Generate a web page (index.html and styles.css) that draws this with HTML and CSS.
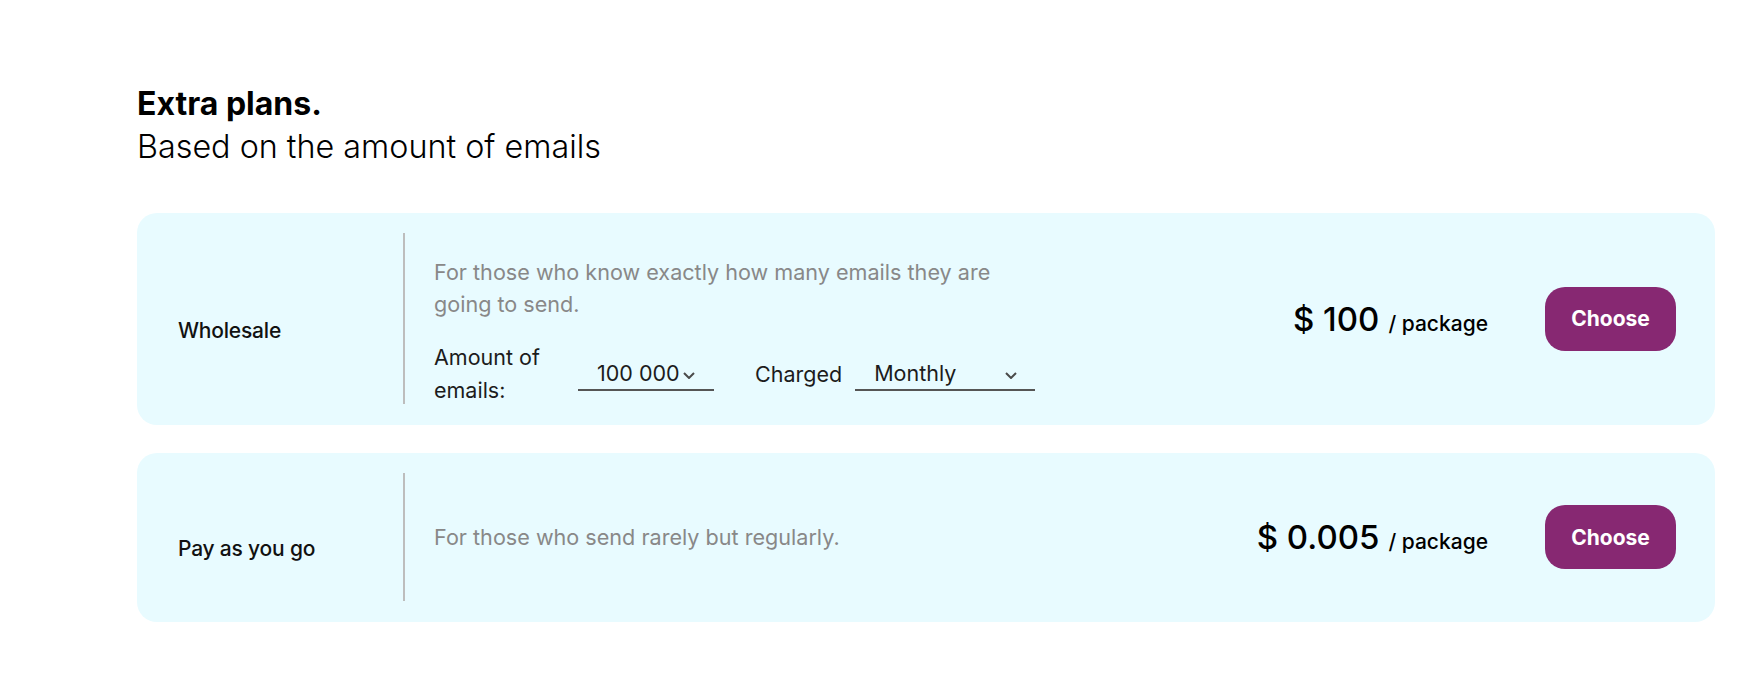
FILE: index.html
```html
<!DOCTYPE html>
<html lang="en">
<head>
    <meta charset="UTF-8">
    <meta name="viewport" content="width=device-width, initial-scale=1.0">
    <title>Extra plans</title>
    <link rel="stylesheet" href="styles.css">
</head>
<body>
    <section class="extra-plans">
        <h2 class="section-title">Extra plans.</h2>
        <p class="section-subtitle">Based on the amount of emails</p>

        <div class="plan-list">
            <div class="plan">
                <div class="plan-name">Wholesale</div>
                <div class="plan-body">
                    <p class="plan-desc">For those who know exactly how many emails they are going to send.</p>
                    <div class="plan-options">
                        <span class="option-label option-label-wrap">Amount of emails:</span>
                        <div class="select select-amount">
                            <span>100 000</span>
                            <svg class="chevron" width="12" height="7" viewBox="0 0 12 7"><path d="M1 1l5 5 5-5" fill="none" stroke="#4a4a4a" stroke-width="2"/></svg>
                        </div>
                        <span class="option-label option-charged">Charged</span>
                        <div class="select select-period">
                            <span>Monthly</span>
                            <svg class="chevron" width="12" height="7" viewBox="0 0 12 7"><path d="M1 1l5 5 5-5" fill="none" stroke="#4a4a4a" stroke-width="2"/></svg>
                        </div>
                    </div>
                </div>
                <div class="plan-price">
                    <span class="amount">$ 100</span>
                    <span class="unit">/ package</span>
                </div>
                <button class="choose">Choose</button>
            </div>

            <div class="plan plan-simple">
                <div class="plan-name">Pay as you go</div>
                <div class="plan-body">
                    <p class="plan-desc">For those who send rarely but regularly.</p>
                </div>
                <div class="plan-price">
                    <span class="amount">$ 0.005</span>
                    <span class="unit">/ package</span>
                </div>
                <button class="choose">Choose</button>
            </div>
        </div>
    </section>
</body>
</html>
```

FILE: styles.css
```css
body {
    font-family: Inter, "Noto Sans", Arial, sans-serif;
    margin: 0;
    background-color: #fff;
    color: #111;
}
.extra-plans {
    padding: 82px 43px 40px 137px;
}
.section-title {
    margin: 0;
    font-size: 32px;
    line-height: 43px;
    font-weight: 700;
    color: #000;
}
.section-subtitle {
    margin: 0 0 45px;
    font-size: 32.3px;
    line-height: 43px;
    font-weight: 300;
    color: #000;
}
.plan-list {
    display: flex;
    flex-direction: column;
    gap: 28px;
}
.plan {
    display: flex;
    align-items: stretch;
    background-color: #e8fbff;
    border-radius: 20px;
    padding: 20px 39px 21px 41px;
}
.plan-name {
    width: 225px;
    flex-shrink: 0;
    display: flex;
    align-items: center;
    padding-top: 23px;
    font-size: 21px;
    font-weight: 500;
    letter-spacing: -0.2px;
    color: #111;
}
.plan-body {
    flex: 1;
    border-left: 2px solid #bdbdbd;
    padding: 23px 0 0 29px;
    display: flex;
    flex-direction: column;
    justify-content: center;
}
.plan-simple .plan-body {
    padding-top: 0;
    min-height: 128px;
}
.plan-desc {
    margin: 0;
    max-width: 580px;
    font-size: 21.6px;
    line-height: 32px;
    color: #888;
}
.plan-options {
    display: flex;
    align-items: center;
    margin: 21px 0 -3px;
    font-size: 21.5px;
    line-height: 33px;
    color: #1c1c1c;
}
.option-label-wrap {
    width: 110px;
}
.select {
    display: flex;
    align-items: center;
    height: 31px;
    padding: 0 18px 0 19px;
    border-bottom: 2px solid #555;
    box-sizing: content-box;
    color: #1c1c1c;
}
.select-amount {
    margin-left: 34px;
    width: 99px;
    gap: 3px;
}
.select-period {
    margin-left: 13px;
    width: 143px;
    justify-content: space-between;
}
.chevron {
    margin-top: 4px;
}
.option-charged {
    margin-left: 41px;
}
.plan-price {
    align-self: center;
    display: flex;
    align-items: baseline;
    gap: 9px;
    margin-right: 57px;
    color: #000;
}
.plan-price .amount {
    font-size: 33px;
    font-weight: 500;
}
.plan-price .unit {
    font-size: 21px;
    font-weight: 500;
}
.choose {
    align-self: center;
    width: 131px;
    height: 64px;
    border: none;
    border-radius: 20px;
    background-color: #872872;
    color: #fff;
    font-family: inherit;
    font-size: 21px;
    font-weight: 700;
    cursor: pointer;
}
.choose:hover {
    background-color: #6f1f5d;
}
```
